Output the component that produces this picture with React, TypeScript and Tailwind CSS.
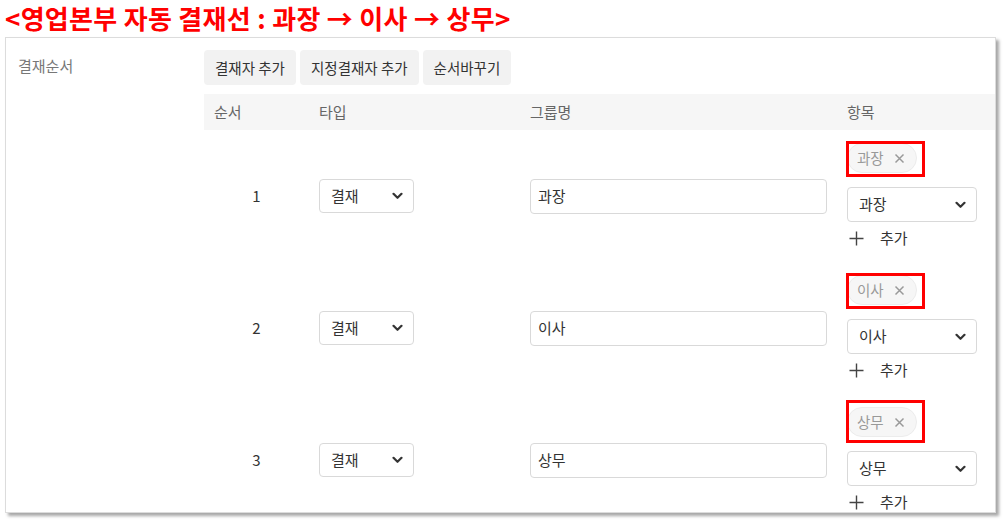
import React from "react";

const font = { fontFamily: '"Noto Sans CJK KR", "Noto Sans", sans-serif' };

interface Row {
  no: number;
  group: string;
  tall?: boolean;
}

const rows: Row[] = [
  { no: 1, group: "과장" },
  { no: 2, group: "이사" },
  { no: 3, group: "상무", tall: true },
];

function Chevron() {
  return (
    <svg width="11" height="8" viewBox="0 0 11 8" fill="none">
      <path d="M1.5 1.8 L5.5 5.8 L9.5 1.8" stroke="#333" strokeWidth="2.2" strokeLinecap="round" strokeLinejoin="round" />
    </svg>
  );
}

function SelectBox({ value, className }: { value: string; className: string }) {
  return (
    <div className={`flex items-center justify-between rounded-[4px] border border-[#d9d9d9] bg-white pl-[11px] pr-[10px] text-[15px] text-[#333] ${className}`}>
      <span>{value}</span>
      <Chevron />
    </div>
  );
}

function ItemCell({ label, tall }: { label: string; tall?: boolean }) {
  return (
    <div className="flex flex-col justify-center pl-[10px]">
      <div className="relative flex h-[30px] w-[70px] items-center gap-[10px] rounded-full border border-[#ececec] bg-[#f6f6f6] pl-[9px] text-[14.5px] text-[#999]">
        <span>{label}</span>
        <svg width="11" height="11" viewBox="0 0 11 11">
          <path d="M1.5 1.5 L9.5 9.5 M9.5 1.5 L1.5 9.5" stroke="#999" strokeWidth="1.5" />
        </svg>
        {/* 주석 표시 */}
        <div
          className={`pointer-events-none absolute left-[-2px] w-[79px] border-[3px] border-[#ff0000] ${
            tall ? "top-[-8px] h-[43px]" : "top-[-3px] h-[36px]"
          }`}
        />
      </div>
      <SelectBox value={label} className="mt-[14px] h-[35px] w-[130px]" />
      <div className="mt-[5px] flex h-[22px] items-center text-[15px] text-[#333]">
        <svg width="15" height="15" viewBox="0 0 15 15" className="ml-[2px]">
          <path d="M7.5 0.5 V14.5 M0.5 7.5 H14.5" stroke="#444" strokeWidth="1.4" />
        </svg>
        <span className="ml-[16px]">추가</span>
      </div>
    </div>
  );
}

export default function App() {
  return (
    <div className="h-[522px] w-[1007px] overflow-hidden bg-white" style={font}>
      <div className="pl-[5px] pt-[1px] text-[26px] font-bold leading-[34px] tracking-[0.3px] text-[#ff0000]">
        &lt;영업본부 자동 결재선 : 과장 → 이사 → 상무&gt;
      </div>
      <div className="ml-[5px] mt-[2px] flex h-[476px] w-[991px] overflow-hidden border border-[#dcdcdc] bg-white shadow-[3px_3px_3px_rgba(0,0,0,0.35)]">
        <div className="w-[198px] shrink-0 pl-[12px] pt-[17px] text-[15px] text-[#777]">결재순서</div>
        <div className="flex-1">
          <div className="mt-[12px] flex gap-[4px]">
            <button className="h-[35px] rounded-[4px] bg-[#f2f2f2] px-[11px] text-[14.5px] text-[#333]">결재자 추가</button>
            <button className="h-[35px] rounded-[4px] bg-[#f2f2f2] px-[11px] text-[14.5px] text-[#333]">지정결재자 추가</button>
            <button className="h-[35px] rounded-[4px] bg-[#f2f2f2] px-[11px] text-[14.5px] text-[#333]">순서바꾸기</button>
          </div>
          <div className="mt-[9px] grid h-[36px] grid-cols-[105px_211px_317px_1fr] items-center bg-[#f6f6f6] text-[15px] text-[#666]">
            <div className="pl-[10px]">순서</div>
            <div className="pl-[10px]">타입</div>
            <div className="pl-[10px]">그룹명</div>
            <div className="pl-[10px]">항목</div>
          </div>
          {rows.map((r) => (
            <div key={r.no} className="grid h-[132px] grid-cols-[105px_211px_317px_1fr] items-center text-[15px] text-[#333]">
              <div className="text-center">{r.no}</div>
              <div className="pl-[10px]">
                <SelectBox value="결재" className="h-[34px] w-[95px]" />
              </div>
              <div className="pl-[10px]">
                <div className="flex h-[35px] w-[297px] items-center rounded-[4px] border border-[#d9d9d9] pl-[7px]">{r.group}</div>
              </div>
              <ItemCell label={r.group} tall={r.tall} />
            </div>
          ))}
        </div>
      </div>
    </div>
  );
}
